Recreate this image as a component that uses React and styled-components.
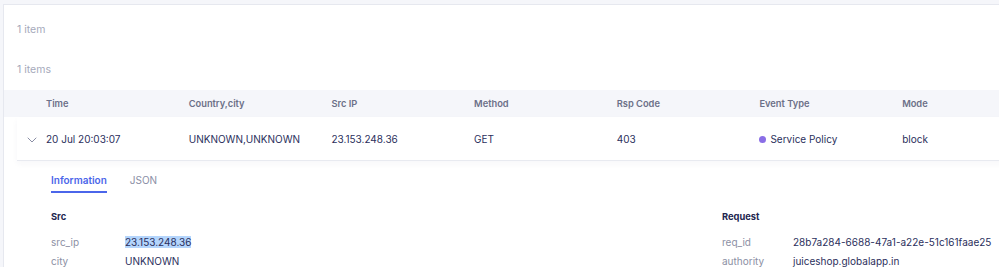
import React from "react";
import styled, { createGlobalStyle } from "styled-components";

const GlobalStyle = createGlobalStyle`
  * { box-sizing: border-box; margin: 0; padding: 0; }
  body {
    background: #f5f6fa;
    font-family: Inter, "Noto Sans", sans-serif;
    overflow: hidden;
  }
`;

const columns = ["Time", "Country,city", "Src IP", "Method", "Rsp Code", "Event Type", "Mode"];

const event = {
  time: "20 Jul 20:03:07",
  location: "UNKNOWN,UNKNOWN",
  srcIp: "23.153.248.36",
  method: "GET",
  rspCode: "403",
  eventType: "Service Policy",
  mode: "block",
};

function App() {
  return (
    <Page>
      <GlobalStyle />
      <Card>
        <Count>1 item</Count>
        <Count>1 items</Count>
        <HeaderRow>
          {columns.map((c) => (
            <HeaderCell key={c}>{c}</HeaderCell>
          ))}
        </HeaderRow>
        <Row>
          <Chevron>
            <svg width="10" height="6" viewBox="0 0 10 6" fill="none">
              <path d="M1 1l4 4 4-4" stroke="#8a8ea5" strokeWidth="1" strokeLinecap="round" strokeLinejoin="round" />
            </svg>
          </Chevron>
          <Cell>{event.time}</Cell>
          <Cell>{event.location}</Cell>
          <Cell>{event.srcIp}</Cell>
          <Cell>{event.method}</Cell>
          <Cell>{event.rspCode}</Cell>
          <Cell>
            <Dot />
            {event.eventType}
          </Cell>
          <Cell>{event.mode}</Cell>
        </Row>
        <Details>
          <Tabs>
            <Tab active>Information</Tab>
            <Tab>JSON</Tab>
          </Tabs>
          <Sections>
            <Section>
              <SectionTitle>Src</SectionTitle>
              <Field labelWidth={74}>
                <Label>src_ip</Label>
                <Value><Selected>{event.srcIp}</Selected></Value>
              </Field>
              <Field labelWidth={74}>
                <Label>city</Label>
                <Value>UNKNOWN</Value>
              </Field>
            </Section>
            <Section>
              <SectionTitle>Request</SectionTitle>
              <Field labelWidth={71}>
                <Label>req_id</Label>
                <Value>28b7a284-6688-47a1-a22e-51c161faae25</Value>
              </Field>
              <Field labelWidth={71}>
                <Label>authority</Label>
                <Value>juiceshop.globalapp.in</Value>
              </Field>
            </Section>
          </Sections>
        </Details>
      </Card>
    </Page>
  );
}

export default App;

const Page = styled.div`
  padding: 4px 0 0 3px;
  width: 999px;
  height: 267px;
  overflow: hidden;
`;

const Card = styled.div`
  background: #ffffff;
  border: 1px solid #e6e8ef;
  border-right: none;
  height: 280px;
  width: 1010px;
`;

const Count = styled.div`
  height: 40px;
  padding-top: 18px;
  padding-left: 13px;
  font-size: 10.5px;
  line-height: 13px;
  color: #a5a9bb;
`;

const HeaderRow = styled.div`
  margin-top: 5px;
  display: grid;
  grid-template-columns: 42px repeat(7, 142.7px);
  background: #f5f6fa;
  height: 27px;
  align-items: center;
  &::before { content: ""; }
`;

const HeaderCell = styled.div`
  font-size: 9.3px;
  font-weight: 600;
  color: #6c7088;
`;

const Row = styled.div`
  margin-left: 13px;
  display: grid;
  grid-template-columns: 29px repeat(7, 142.7px);
  height: 44px;
  padding-top: 1px;
  align-items: center;
  border-bottom: 1px solid #e8eaf0;
  box-shadow: 0 3px 6px rgba(40, 45, 90, 0.04);
`;

const Chevron = styled.div`
  display: flex;
  justify-content: center;
  padding-top: 2px;
`;

const Cell = styled.div`
  display: flex;
  align-items: center;
  font-size: 10px;
  color: #2b2f5c;
`;

const Dot = styled.span`
  width: 7px;
  height: 7px;
  border-radius: 50%;
  background: #8a6ee6;
  margin-right: 4px;
`;

const Details = styled.div`
  padding-left: 47px;
`;

const Tabs = styled.div`
  display: flex;
  gap: 23px;
  padding-top: 13px;
`;

const Tab = styled.div`
  font-size: 10px;
  line-height: 13px;
  font-weight: ${(p) => (p.active ? 600 : 400)};
  color: ${(p) => (p.active ? "#4b66ea" : "#8a8ea5")};
  padding-bottom: 4px;
  border-bottom: 2px solid ${(p) => (p.active ? "#4b66ea" : "transparent")};
`;

const Sections = styled.div`
  display: grid;
  grid-template-columns: 671px 1fr;
  padding-top: 18px;
`;

const Section = styled.div`
  display: flex;
  flex-direction: column;
`;

const SectionTitle = styled.div`
  font-size: 9.3px;
  font-weight: 700;
  color: #22264f;
  height: 12px;
  margin-bottom: 9px;
`;

const Field = styled.div`
  display: grid;
  grid-template-columns: ${(p) => p.labelWidth}px auto;
  align-items: center;
  height: 19px;
  font-size: 10px;
`;

const Label = styled.div`
  color: #8c90a4;
`;

const Value = styled.div`
  color: #2b2f5c;
`;

const Selected = styled.span`
  background: #b4d5fc;
`;
